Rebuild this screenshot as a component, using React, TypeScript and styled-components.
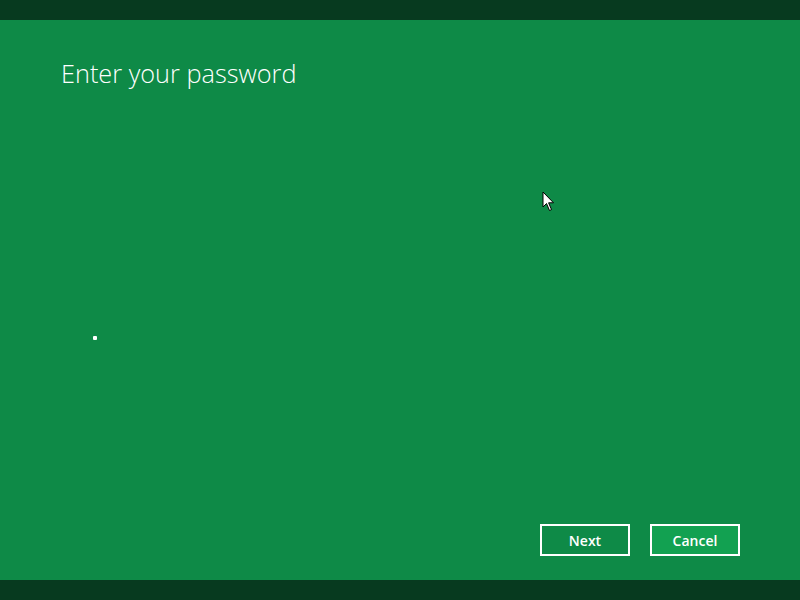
import React from "react";
import styled, { createGlobalStyle } from "styled-components";

const GlobalStyle = createGlobalStyle`
  html, body { margin: 0; padding: 0; }
  body { font-family: "Open Sans", "Noto Sans", sans-serif; }
`;

function App() {
  return (
    <>
      <GlobalStyle />
      <Screen>
        <Bar />
        <Main>
          <Title>Enter your password</Title>
          <PasswordField>
            <Dot />
          </PasswordField>
          <Spacer />
          <Actions>
            <Button>Next</Button>
            <Button $primary>Cancel</Button>
          </Actions>
          <Pointer width="14" height="22" viewBox="0 0 14 22">
            <path
              d="M1 1 L1 16 L4.5 12.5 L7.5 19.5 L9.5 18.6 L6.6 11.8 L11.5 11.8 Z"
              fill="#fff"
              stroke="#000"
              strokeWidth="1"
              strokeLinejoin="miter"
            />
          </Pointer>
        </Main>
        <Bar />
      </Screen>
    </>
  );
}

export default App;

const Screen = styled.div`
  width: 800px;
  height: 600px;
  display: flex;
  flex-direction: column;
  background-color: #0e8a47;
  overflow: hidden;
`;
const Bar = styled.div`
  height: 20px;
  background-color: #073a1f;
  flex-shrink: 0;
`;
const Main = styled.div`
  position: relative;
  flex: 1;
  display: flex;
  flex-direction: column;
  padding: 0 60px 24px 60px;
`;
const Title = styled.h1`
  margin: 36px 0 0 1px;
  font-size: 25.3px;
  font-weight: 300;
  color: #ffffff;
  line-height: 34px;
`;
const PasswordField = styled.div`
  margin-top: 246px;
  padding-left: 33px;
  height: 4px;
  display: flex;
  align-items: center;
`;
const Dot = styled.span`
  display: block;
  width: 4px;
  height: 4px;
  background: #ffffff;
  border-radius: 1px;
`;
const Spacer = styled.div`
  flex: 1;
`;
const Actions = styled.div`
  display: flex;
  justify-content: flex-end;
  gap: 20px;
`;
const Button = styled.button<{ $primary?: boolean }>`
  width: 90px;
  height: 32px;
  box-sizing: border-box;
  border: 2px solid #ffffff;
  background-color: ${(p) => (p.$primary ? "#12a151" : "transparent")};
  color: #ffffff;
  font-family: "Open Sans", "Noto Sans", sans-serif;
  font-size: 14px;
  font-weight: 600;
  padding: 0;
  cursor: pointer;
`;
const Pointer = styled.svg`
  position: absolute;
  left: 542px;
  top: 171px;
`;
